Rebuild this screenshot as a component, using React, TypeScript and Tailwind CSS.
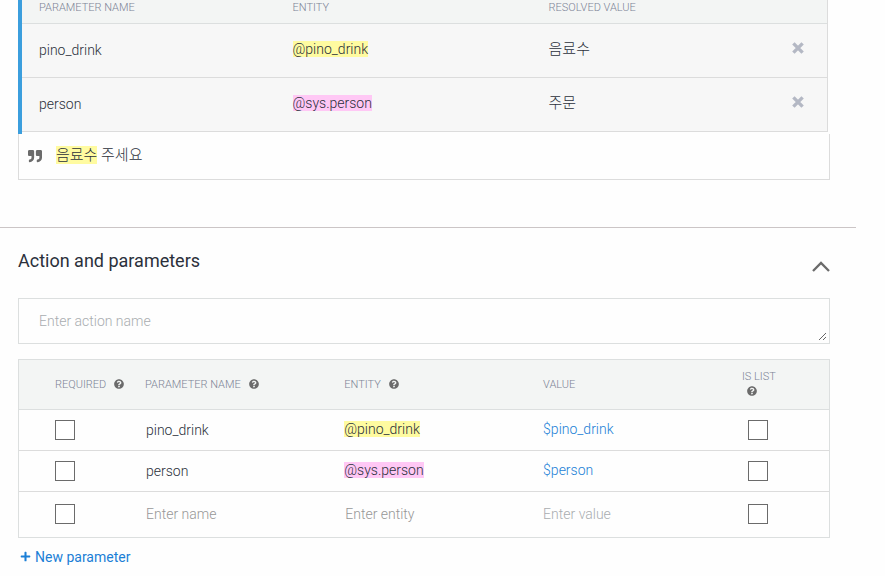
import { FaPlus, FaQuestionCircle, FaQuoteRight } from "react-icons/fa";

const examples = [
  { name: "pino_drink", entity: "@pino_drink", value: "음료수", mark: "bg-[#fffba0]" },
  { name: "person", entity: "@sys.person", value: "주문", mark: "bg-[#ffc8f5]" },
];

const headCell = "border-b border-[#dcdfdf] bg-[#f3f5f4] p-0 text-left text-[11px] font-light text-[#7d8496]";

function ExampleTable() {
  const head = headCell + " pb-2 pl-[17px] leading-[15px]";
  const cell = "h-[54px] border-b border-[#dcdcdc] bg-[#f7f7f7] p-0 pl-[17px]";
  return (
    <div className="border-l-4 border-[#3b9edd] pr-[2px] pb-[2px]">
      <table className="w-full table-fixed border-separate border-spacing-0 border-r border-[#dcdcdc] text-sm font-light">
        <colgroup>
          <col className="w-[31.5%]" />
          <col className="w-[31.8%]" />
          <col />
          <col className="w-[59px]" />
        </colgroup>
        <thead>
          <tr>
            <th className={head}>PARAMETER NAME</th>
            <th className={head}>ENTITY</th>
            <th className={head}>RESOLVED VALUE</th>
            <th className={head}></th>
          </tr>
        </thead>
        <tbody>
          {examples.map((e) => (
            <tr key={e.name}>
              <td className={cell + " pb-[2px]"}>{e.name}</td>
              <td className={cell + " pb-1"}>
                <span className={e.mark}>{e.entity}</span>
              </td>
              <td className={cell + " pb-[2px] text-[15px]"}>{e.value}</td>
              <td className="h-[54px] border-b border-[#dcdcdc] bg-[#f7f7f7] p-0 pb-1 text-center">
                <button type="button" aria-label={"Remove " + e.name} className="align-middle text-[#b4b8c4]">
                  <svg viewBox="0 0 12 12" className="mb-1 size-3" stroke="currentColor" strokeWidth="3.4">
                    <path d="M1.4 1.4 10.6 10.6M10.6 1.4 1.4 10.6" />
                  </svg>
                </button>
              </td>
            </tr>
          ))}
        </tbody>
      </table>
    </div>
  );
}

function Help({ label, className = "" }: { label: string; className?: string }) {
  return (
    <button type="button" aria-label={"About " + label} className={"text-[#6b6b6b] " + className}>
      <FaQuestionCircle className="size-[10px]" />
    </button>
  );
}

function Check({ label }: { label: string }) {
  return (
    <input
      type="checkbox"
      aria-label={label}
      className="block size-5 appearance-none border border-[#6b6b6b] bg-white checked:bg-[#6b6b6b]"
    />
  );
}

function HeadLabel({ text }: { text: string }) {
  return (
    <div className="flex items-center gap-2">
      {text}
      <Help label={text.toLowerCase()} />
    </div>
  );
}

function ParameterTable() {
  const head = headCell + " h-[50px]";
  const cell = "h-[41px] border-b border-[#dcdcdc] p-0";
  const last = "h-[45px] p-0 pb-[2px]";
  const field = "block w-full bg-transparent pl-px text-sm font-light outline-none placeholder:text-[#979797]";
  return (
    <div className="mt-[15px] border border-[#dcdfdf]">
      <table className="w-full table-fixed border-separate border-spacing-0 text-sm font-light">
        <colgroup>
          <col className="w-[126px]" />
          <col className="w-[24.6%]" />
          <col className="w-[24.55%]" />
          <col className="w-[24.55%]" />
          <col />
        </colgroup>
        <thead>
          <tr>
            <th className={head + " pl-9"}>
              <HeadLabel text="REQUIRED" />
            </th>
            <th className={head}>
              <HeadLabel text="PARAMETER NAME" />
            </th>
            <th className={head}>
              <HeadLabel text="ENTITY" />
            </th>
            <th className={head}>VALUE</th>
            <th className={head + " pb-[2px] leading-[15px]"}>
              <div>IS LIST</div>
              <Help label="is list" className="ml-[5px] flex h-[15px] items-center" />
            </th>
          </tr>
        </thead>
        <tbody>
          {examples.map((e) => (
            <tr key={e.name}>
              <td className={cell + " pl-9"}>
                <Check label={e.name + " is required"} />
              </td>
              <td className={cell + " pl-px"}>{e.name}</td>
              <td className={cell + " pb-[2px]"}>
                <span className={e.mark}>{e.entity}</span>
              </td>
              <td className={cell + " pb-[2px] text-[#1b7fd6]"}>${e.name}</td>
              <td className={cell + " pl-[6px]"}>
                <Check label={e.name + " is a list"} />
              </td>
            </tr>
          ))}
          <tr>
            <td className={last + " pl-9"}>
              <Check label="New parameter is required" />
            </td>
            <td className={last}>
              <input type="text" aria-label="Name" placeholder="Enter name" className={field} />
            </td>
            <td className={last}>
              <input type="text" aria-label="Entity" placeholder="Enter entity" className={field} />
            </td>
            <td className={last}>
              <input
                type="text"
                aria-label="Value"
                placeholder="Enter value"
                className="block w-full bg-transparent text-sm font-light outline-none placeholder:text-[#a9adb0]"
              />
            </td>
            <td className={last + " pl-[6px]"}>
              <Check label="New parameter is a list" />
            </td>
          </tr>
        </tbody>
      </table>
    </div>
  );
}

export default function App() {
  return (
    <div className="min-h-screen bg-[#fefefe] pr-[29px] font-[Roboto,'Noto_Sans_CJK_KR',sans-serif] text-[#2b303b]">
      <section className="border-b border-[#cbc5c6] pr-[26px] pb-[47px] pl-[18px]">
        <ExampleTable />
        <div className="flex h-[46px] items-center gap-[14px] border-x border-b border-[#dcdcdc] pb-[2px] pl-[9px] text-[15px] font-light">
          <FaQuoteRight className="size-[14px] text-[#6b6b6b]" />
          <p>
            <span className="bg-[#fffba0]">음료수</span> 주세요
          </p>
        </div>
      </section>

      <section className="pt-5 pr-[26px] pl-[18px]">
        <div className="flex items-start justify-between">
          <h2 className="text-lg leading-[26px]">Action and parameters</h2>
          <button type="button" aria-label="Collapse section" className="flex h-[34px] items-end pb-[10px] text-[#6b6b6b]">
            <svg viewBox="0 0 18 11" className="h-[11px] w-[18px]" fill="none" stroke="currentColor" strokeWidth="2.3">
              <path d="M1 10 9 2l8 8" />
            </svg>
          </button>
        </div>
        <div className="mt-4 border border-[#dcdfdf] p-[2px]">
          <textarea
            rows={1}
            aria-label="Action name"
            placeholder="Enter action name"
            className="block h-10 w-full resize bg-transparent px-[18px] py-[10px] text-sm leading-5 font-light outline-none placeholder:text-[#a9adb0]"
          />
        </div>
        <ParameterTable />
        <button type="button" className="mt-2 flex items-center gap-1 pl-[2px] text-sm leading-[22px] text-[#1b7fd6]">
          <FaPlus className="mb-[2px] size-[11px]" />
          New parameter
        </button>
      </section>
    </div>
  );
}
